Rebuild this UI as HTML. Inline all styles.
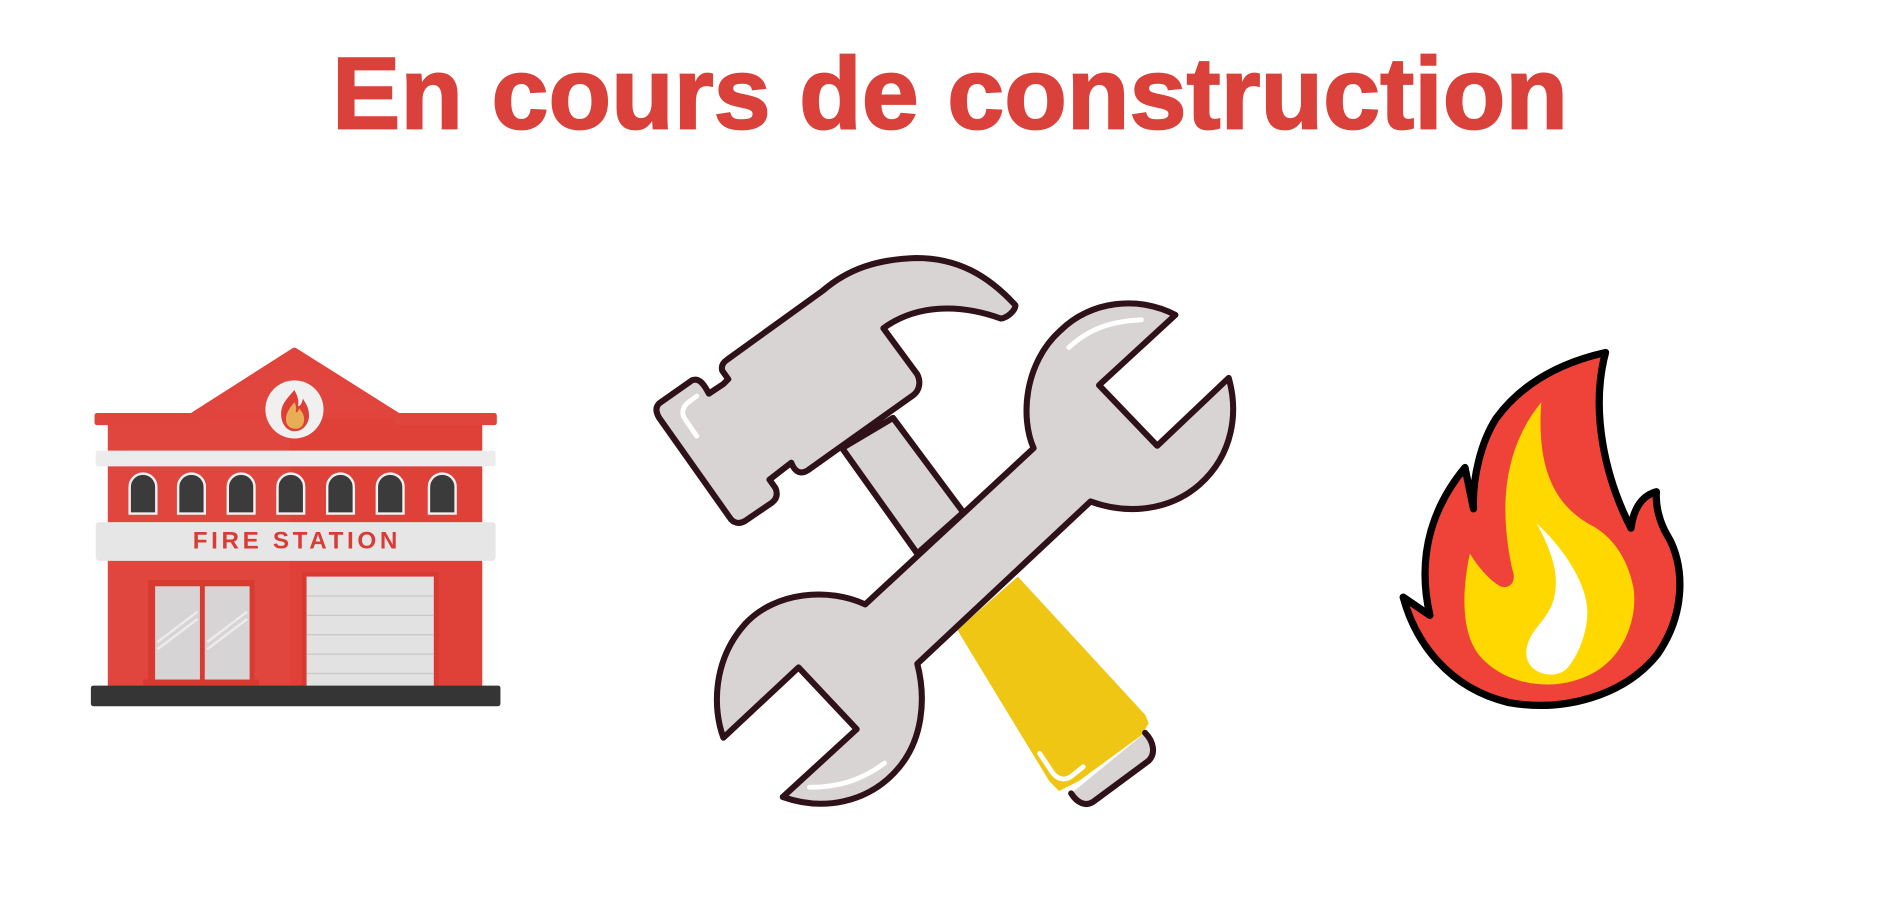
<!DOCTYPE html>
<html><head><meta charset="utf-8"><style>
html,body{margin:0;padding:0;background:#fff;width:1900px;height:900px;overflow:hidden}
svg{display:block}
</style></head><body>
<svg width="1900" height="900" viewBox="0 0 1568 743" preserveAspectRatio="none" xmlns="http://www.w3.org/2000/svg">
<rect width="1568" height="743" fill="#fff"/>
<text x="784" y="106" text-anchor="middle" font-family="Liberation Sans, sans-serif" font-weight="bold" font-size="84" fill="#d9413a" stroke="#d9413a" stroke-width="1.5" textLength="1020" lengthAdjust="spacingAndGlyphs">En cours de construction</text>

<!-- Fire station -->
<g>
<rect x="89" y="345" width="309" height="222" fill="#df4139"/>
<rect x="89" y="345" width="150" height="222" fill="#e24a42" opacity="0.6"/>
<polygon points="160,343 243,290 327,343" fill="#e0463e" stroke="#e0443c" stroke-width="6" stroke-linejoin="round"/>
<rect x="78" y="341" width="84" height="10" rx="2" fill="#e0453d"/>
<rect x="325" y="341" width="85" height="10" rx="2" fill="#e0453d"/>
<circle cx="243" cy="338" r="24" fill="#f0f0f0"/>
<path d="M243,322 C236,330 232,334 232,342 C232,350 237,356 243,356 C250,356 255,350 255,343 C255,336 252,333 250,329 C249,334 247,336 246,335 C247,330 245,326 243,322Z" fill="#dd3e36"/>
<path d="M243,332 C238,338 236,342 236,346 C236,351 239,354 244,354 C249,354 251,350 251,346 C251,342 249,340 247,337 C246,340 245,341 244,340 C245,337 244,334 243,332Z" fill="#e8ae55"/>
<rect x="79" y="372" width="330" height="13" rx="2" fill="#ececec"/>
<g fill="#3b3b3b" stroke="#f2f2f2" stroke-width="2">
<path d="M107,424 V402 a11,11 0 0 1 22,0 V424Z"/>
<path d="M147,424 V402 a11,11 0 0 1 22,0 V424Z"/>
<path d="M188,424 V402 a11,11 0 0 1 22,0 V424Z"/>
<path d="M229,424 V402 a11,11 0 0 1 22,0 V424Z"/>
<path d="M270,424 V402 a11,11 0 0 1 22,0 V424Z"/>
<path d="M311,424 V402 a11,11 0 0 1 22,0 V424Z"/>
<path d="M354,424 V402 a11,11 0 0 1 22,0 V424Z"/>
</g>
<rect x="79" y="431" width="330" height="32" rx="3" fill="#e6e6e6"/>
<text x="245" y="453" text-anchor="middle" font-family="Liberation Sans, sans-serif" font-weight="bold" font-size="20" letter-spacing="3" fill="#d93c35">FIRE STATION</text>
<rect x="122" y="479" width="88" height="86" fill="#d83a32"/>
<rect x="128" y="484" width="37" height="78" fill="#d6d4d4"/>
<rect x="169" y="484" width="37" height="78" fill="#d6d4d4"/>
<path d="M130,530 L163,505 M130,536 L163,511 M171,530 L204,505 M171,536 L204,511" stroke="#ececec" stroke-width="2"/>
<rect x="118" y="561" width="96" height="6" fill="#d83a32"/>
<rect x="249" y="472" width="113" height="95" fill="#d83a32"/>
<rect x="253" y="476" width="105" height="91" fill="#e2e2e2"/>
<path d="M253,492 H358 M253,508 H358 M253,524 H358 M253,540 H358 M253,556 H358" stroke="#c8c8c8" stroke-width="1"/>
<rect x="75" y="566" width="338" height="17" rx="2" fill="#353535"/>
</g>

<!-- Tools -->
<g stroke="#2e1119" stroke-width="5" stroke-linejoin="round" stroke-linecap="round">
<path d="M695,370 L757,457 L795,423 L737,345Z" fill="#d8d4d3"/>
<path d="M790,520 L866,645 L874,653 L890,645 L942,607 L948,597 L945,590 L840,476Z" fill="#efc613" stroke="none"/>
<path d="M945,605 C952,612 954,622 948,628 L902,662 C896,666 889,663 884,655" fill="#d8d4d3"/>
<path d="M544,333 L571,314 C576,312 580,315 585,325 L597,317 L601,313 L596,306 C595,302 597,299 600,297 L679,240 C700,222 724,214 756,213 C790,213 815,227 838,252 C838,256 832,262 826,263 C790,250 755,252 729,271 L757,309 C760,315 759,322 754,326 L667,388 C661,392 656,390 653,382 L635,396 L640,403 C642,408 641,412 637,415 L615,430 C610,433 605,432 602,427 L544,345 C541,340 541,336 544,333Z" fill="#d8d4d3"/>
<path d="M853,370 C842,345 845,300 875,273 C900,248 940,244 970,260 L907,318 L955,368 L1014,312 C1022,340 1018,375 990,400 C965,422 930,425 900,414 L757,548 C764,575 763,612 738,638 C715,662 680,670 646,658 L707,602 L659,551 L597,609 C588,585 588,545 615,515 C640,488 685,485 714,499 Z" fill="#d8d4d3"/>
</g>
<g stroke="#ffffff" stroke-width="4" stroke-linecap="round" fill="none">
<path d="M575,327 L567,333 C563,337 562,342 566,347 L575,360"/>
<path d="M882,287 C900,270 920,265 942,264"/>
<path d="M668,650 C690,650 710,645 730,630"/>
<path d="M858,622 L868,637 C872,643 878,645 884,641 L894,633"/>
</g>

<!-- Flame -->
<path d="M1325,291 C1285,300 1255,318 1235,345 C1222,365 1215,395 1216,420 L1209,386 C1185,415 1168,455 1180,508 L1158,493 C1168,530 1195,568 1245,580 C1290,588 1340,575 1368,540 C1392,505 1390,465 1376,442 C1370,432 1366,418 1367,406 C1355,409 1348,420 1346,436 C1325,395 1312,340 1325,291Z" fill="#ef4339" stroke="#000" stroke-width="6" stroke-linejoin="round"/>
<path d="M1272,332 C1245,365 1235,410 1248,470 C1252,480 1246,487 1238,484 C1228,478 1220,468 1213,457 C1207,485 1205,520 1220,540 C1240,565 1280,572 1310,558 C1340,545 1352,510 1348,485 C1343,460 1330,442 1312,433 C1282,416 1268,385 1272,332Z" fill="#ffd800"/>
<path d="M1268,432 C1290,452 1310,482 1310,505 C1310,525 1300,545 1293,552 C1285,560 1268,558 1262,548 C1256,538 1262,525 1270,516 C1280,504 1284,495 1284,480 C1284,465 1276,446 1268,432Z" fill="#fff"/>
</svg>
</body></html>
